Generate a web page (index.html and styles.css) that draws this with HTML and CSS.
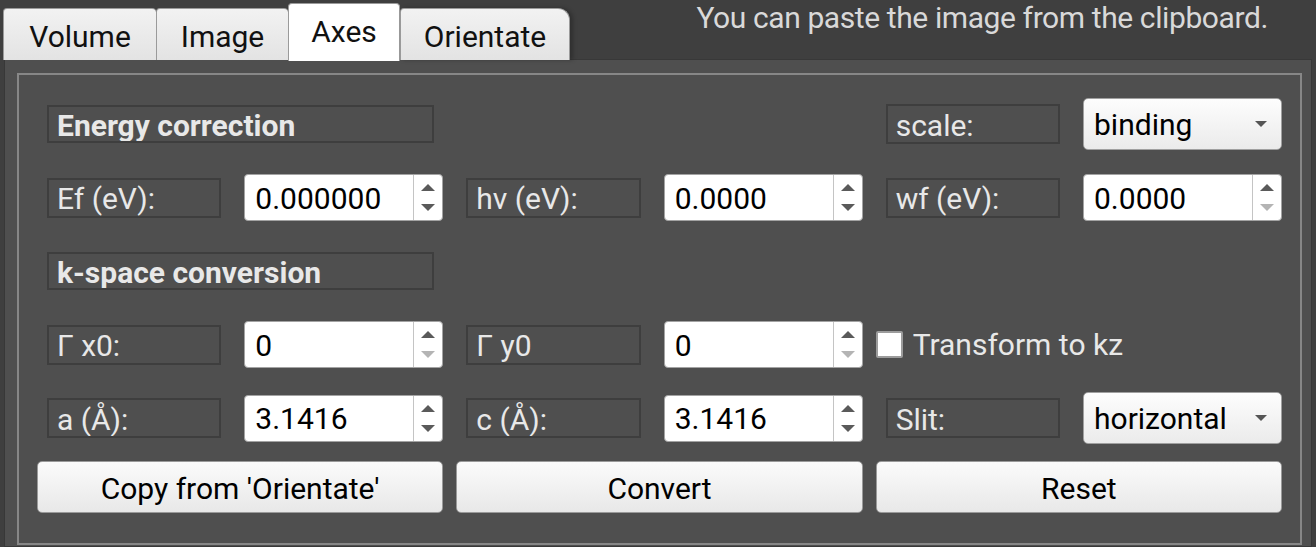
FILE: index.html
```html
<!DOCTYPE html>
<html>
<head>
<meta charset="utf-8">
<link rel="stylesheet" href="styles.css">
</head>
<body>
<div class="top">
  <div class="tabs">
    <div class="tab tab-volume">Volume</div>
    <div class="tab tab-image">Image</div>
    <div class="tab tab-axes sel">Axes</div>
    <div class="tab tab-orient">Orientate</div>
  </div>
  <div class="msg">You can paste the image from the clipboard.</div>
</div>
<div class="pane">
  <div class="group">
    <div class="form">
      <div class="head-field"><div class="lbl head">Energy correction</div></div>
      <div class="field"></div>
      <div class="field">
        <div class="lbl">scale:</div>
        <div class="combo"><span class="cval">binding</span><span class="caret"></span></div>
      </div>

      <div class="field">
        <div class="lbl">Ef (eV):</div>
        <div class="spin"><span class="val">0.000000</span><span class="arrows"><i class="up"></i><i class="down"></i></span></div>
      </div>
      <div class="field">
        <div class="lbl">hν (eV):</div>
        <div class="spin"><span class="val">0.0000</span><span class="arrows"><i class="up"></i><i class="down"></i></span></div>
      </div>
      <div class="field">
        <div class="lbl">wf (eV):</div>
        <div class="spin"><span class="val">0.0000</span><span class="arrows"><i class="up"></i><i class="down dis"></i></span></div>
      </div>

      <div class="head-field"><div class="lbl head">k-space conversion</div></div>
      <div class="field"></div>
      <div class="field"></div>

      <div class="field">
        <div class="lbl">Γ x0:</div>
        <div class="spin"><span class="val">0</span><span class="arrows"><i class="up"></i><i class="down dis"></i></span></div>
      </div>
      <div class="field">
        <div class="lbl">Γ y0</div>
        <div class="spin"><span class="val">0</span><span class="arrows"><i class="up"></i><i class="down dis"></i></span></div>
      </div>
      <div class="check-field">
        <span class="checkbox"></span><span class="check-text">Transform to kz</span>
      </div>

      <div class="field">
        <div class="lbl">a (Å):</div>
        <div class="spin"><span class="val">3.1416</span><span class="arrows"><i class="up"></i><i class="down"></i></span></div>
      </div>
      <div class="field">
        <div class="lbl">c (Å):</div>
        <div class="spin"><span class="val">3.1416</span><span class="arrows"><i class="up"></i><i class="down"></i></span></div>
      </div>
      <div class="field">
        <div class="lbl">Slit:</div>
        <div class="combo"><span class="cval">horizontal</span><span class="caret"></span></div>
      </div>
    </div>
    <div class="btns">
      <div class="btn">Copy from 'Orientate'</div>
      <div class="btn">Convert</div>
      <div class="btn">Reset</div>
    </div>
  </div>
</div>
</body>
</html>
```

FILE: styles.css
```css
html, body {
  margin: 0;
  padding: 0;
}
body {
  width: 1316px;
  height: 547px;
  overflow: hidden;
  background: #3f3f3f;
  font-family: Roboto, "Noto Sans", sans-serif;
  font-size: 30px;
  color: #e8e8e8;
}

.top {
  display: flex;
  height: 60px;
  position: relative;
  z-index: 1;
}
.tabs {
  display: flex;
  align-items: flex-end;
  padding-left: 3px;
}
.tab {
  height: 52px;
  box-sizing: border-box;
  border: 1px solid #9a9a9a;
  border-bottom: none;
  border-right: none;
  border-radius: 4px 4px 0 0;
  background: linear-gradient(#f2f2f2, #e3e3e3);
  color: #111;
  display: flex;
  align-items: center;
  justify-content: center;
  padding-top: 3px;
}
.tab.sel {
  height: 58px;
  margin-bottom: -1px;
  background: #ffffff;
  border-right: 1px solid #9a9a9a;
  padding-top: 0;
  padding-bottom: 2px;
}
.tab-volume { width: 153px; }
.tab-image { width: 132px; }
.tab-axes { width: 112px; }
.tab-orient {
  width: 170px;
  border-right: 1px solid #9a9a9a;
  border-radius: 4px 12px 0 0;
  box-shadow: 3px 0 4px rgba(0,0,0,0.25);
}
.msg {
  margin-left: auto;
  padding-right: 48px;
  padding-top: 2px;
  line-height: 32px;
  letter-spacing: -0.4px;
  color: #d9d9d9;
  white-space: nowrap;
}

.pane {
  box-sizing: border-box;
  height: 488px;
  margin: -1px 4px 0 4px;
  border: 1px solid #383838;
  background: #4f4f4f;
  padding: 13px 9px 0 12px;
  overflow: hidden;
}
.group {
  border: 2px solid #878787;
  padding: 23px 18px 30px 18px;
}
.form {
  display: grid;
  grid-template-columns: repeat(3, minmax(0, 1fr));
  column-gap: 13px;
  grid-auto-rows: 52px;
  row-gap: 21.5px;
}
.field {
  display: grid;
  grid-template-columns: minmax(0, 1fr) 199px;
  column-gap: 23px;
  padding-left: 10px;
  align-items: center;
}
.head-field {
  display: flex;
  align-items: center;
  padding-left: 10px;
}
.lbl {
  height: 40px;
  box-sizing: border-box;
  border: 2px solid #3e3e3e;
  padding-left: 8px;
  padding-top: 2px;
  display: flex;
  align-items: center;
  white-space: nowrap;
  overflow: hidden;
  color: #e8e8e8;
}
.lbl.head {
  width: 387px;
  flex: none;
  height: 38px;
  font-weight: bold;
}
.spin {
  height: 47px;
  box-sizing: border-box;
  background: #ffffff;
  border: 1px solid #a3a3a3;
  border-radius: 4px;
  display: flex;
  color: #000;
}
.val {
  flex: 1;
  padding-left: 10px;
  padding-top: 1px;
  display: flex;
  align-items: center;
}
.arrows {
  width: 28px;
  border-left: 1px solid #c4c4c4;
  display: flex;
  flex-direction: column;
  align-items: center;
  justify-content: center;
  gap: 13px;
}
.up, .down {
  display: block;
  width: 0;
  height: 0;
  border-left: 7px solid transparent;
  border-right: 7px solid transparent;
}
.up { border-bottom: 7px solid #5a5a5a; }
.down { border-top: 7px solid #5a5a5a; }
.down.dis { border-top-color: #b4b4b4; }

.combo {
  height: 52px;
  box-sizing: border-box;
  border: 1px solid #a0a0a0;
  border-radius: 5px;
  background: linear-gradient(#fdfdfd, #ebebeb);
  display: flex;
  align-items: center;
  padding: 0 14px 0 10px;
  color: #000;
}
.cval { flex: 1; }
.caret {
  width: 0;
  height: 0;
  border-left: 6px solid transparent;
  border-right: 6px solid transparent;
  border-top: 6px solid #555;
}

.check-field {
  display: flex;
  align-items: center;
  gap: 10px;
}
.checkbox {
  width: 27px;
  height: 27px;
  box-sizing: border-box;
  background: #ffffff;
  border: 2px solid #9c9c9c;
  border-radius: 2px;
}
.check-text { color: #e8e8e8; }

.btns {
  display: grid;
  grid-template-columns: repeat(3, minmax(0, 1fr));
  column-gap: 13px;
  margin-top: 17px;
}
.btn {
  height: 52px;
  box-sizing: border-box;
  border: 1px solid #9a9a9a;
  border-radius: 5px;
  background: linear-gradient(#fbfbfb, #e8e8e8);
  color: #000;
  display: flex;
  align-items: center;
  justify-content: center;
  padding-top: 2px;
}
```
